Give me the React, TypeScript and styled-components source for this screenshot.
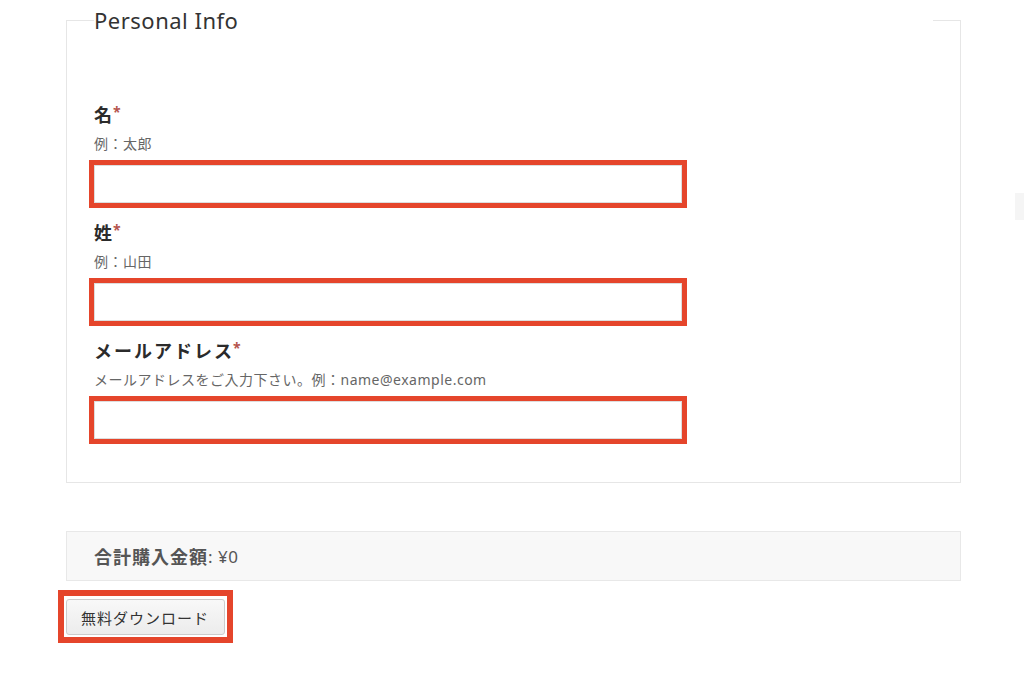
import React from "react";
import styled, { createGlobalStyle } from "styled-components";

const GlobalStyle = createGlobalStyle`
  html, body { margin: 0; padding: 0; background: #ffffff; }
  body {
    font-family: "Noto Sans", "Noto Sans CJK JP", sans-serif;
    color: #333333;
  }
`;

const ANNOTATION = "#e5452b";

const Page = styled.div`
  padding: 5px 63px 40px 66px;
`;

const Fieldset = styled.fieldset`
  margin: 0;
  padding: 68px 27px 43px 27px;
  border: 1px solid #e6e6e6;
  min-width: 0;
`;

const Legend = styled.legend`
  width: 100%;
  padding: 0;
  font-size: 22px;
  line-height: 30px;
  color: #333333;
  letter-spacing: 0.5px;
  font-weight: 400;
`;

const Field = styled.div<{ $last?: boolean }>`
  display: flex;
  flex-direction: column;
  margin-bottom: ${(p) => (p.$last ? 0 : 18)}px;
`;

const Label = styled.label`
  font-size: 18px;
  line-height: 24px;
  font-weight: 700;
  color: #2b2b2b;
  letter-spacing: 2px;
`;

const Required = styled.span`
  color: #b5534d;
  font-size: 14px;
  font-weight: 700;
  letter-spacing: 0;
  vertical-align: top;
  position: relative;
  top: -3px;
  margin-left: -1px;
`;

const Help = styled.div`
  margin-top: 7px;
  font-size: 14px;
  line-height: 20px;
  color: #666666;
  letter-spacing: 0.5px;
`;

const TextInput = styled.input`
  margin-top: 11px;
  width: 588px;
  height: 38px;
  box-sizing: border-box;
  border: 1px solid #dddddd;
  background: #ffffff;
  outline: 5px solid ${ANNOTATION};
  outline-offset: 0;
  font-size: 14px;
  padding: 0 10px;
`;

const Summary = styled.div`
  margin-top: 48px;
  height: 50px;
  box-sizing: border-box;
  border: 1px solid #e8e8e8;
  background: #f8f8f8;
  display: flex;
  align-items: center;
  padding-left: 27px;
  color: #555555;
`;

const SummaryLabel = styled.strong`
  font-size: 18px;
  font-weight: 700;
  letter-spacing: 1px;
`;

const SummaryValue = styled.span`
  font-size: 17px;
  letter-spacing: 0.5px;
`;

const Actions = styled.div`
  margin-top: 9px;
  margin-left: -8px;
  display: flex;
`;

const Highlight = styled.div`
  border: 6px solid ${ANNOTATION};
  padding: 3px 2px 2px 2px;
  display: flex;
`;

const DownloadButton = styled.button`
  height: 36px;
  width: 159px;
  box-sizing: border-box;
  border: 1px solid #cccccc;
  border-radius: 3px;
  background: linear-gradient(#f8f8f8, #ececec);
  color: #333333;
  font-family: "Noto Sans CJK JP", sans-serif;
  font-size: 15px;
  letter-spacing: 1px;
  padding: 0 0 0 14px;
  text-align: left;
`;

const SideTab = styled.div`
  position: fixed;
  right: 0;
  top: 193px;
  width: 9px;
  height: 27px;
  background: #f5f5f5;
`;

const fields = [
  { id: "first", label: "名", help: "例：太郎" },
  { id: "last", label: "姓", help: "例：山田" },
  {
    id: "email",
    label: "メールアドレス",
    help: "メールアドレスをご入力下さい。例：name@example.com",
  },
];

export default function App() {
  return (
    <>
      <GlobalStyle />
      <Page>
        <Fieldset>
          <Legend>Personal Info</Legend>
          {fields.map((f, i) => (
            <Field key={f.id} $last={i === fields.length - 1}>
              <Label htmlFor={f.id}>
                {f.label}
                <Required>*</Required>
              </Label>
              <Help>{f.help}</Help>
              <TextInput id={f.id} type="text" />
            </Field>
          ))}
        </Fieldset>
        <Summary>
          <SummaryLabel>合計購入金額</SummaryLabel>
          <SummaryValue>: ¥0</SummaryValue>
        </Summary>
        <Actions>
          <Highlight>
            <DownloadButton type="button">無料ダウンロード</DownloadButton>
          </Highlight>
        </Actions>
      </Page>
      <SideTab />
    </>
  );
}
